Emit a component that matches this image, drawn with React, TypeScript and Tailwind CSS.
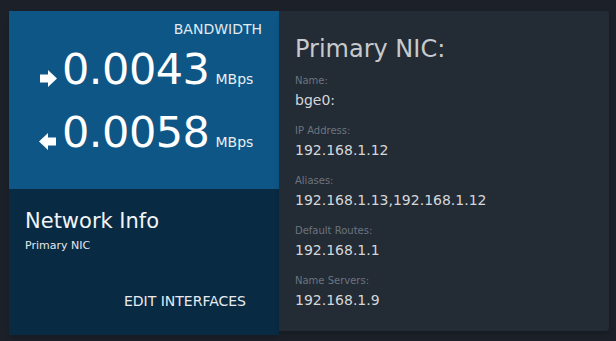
import React from "react";

interface IField {
  label: string;
  value: string;
}

const fields: IField[] = [
  { label: "Name:", value: "bge0:" },
  { label: "IP Address:", value: "192.168.1.12" },
  { label: "Aliases:", value: "192.168.1.13,192.168.1.12" },
  { label: "Default Routes:", value: "192.168.1.1" },
  { label: "Name Servers:", value: "192.168.1.9" },
];

const Arrow = ({ dir }: { dir: "in" | "out" }) => (
  <svg
    width="18"
    height="17"
    viewBox="0 0 18 17"
    className={dir === "in" ? "rotate-180" : ""}
  >
    <polygon points="1,4.5 9,4.5 9,0 18,8.5 9,17 9,12.5 1,12.5" fill="#ffffff" />
  </svg>
);

const Rate = ({ dir, value }: { dir: "in" | "out"; value: string }) => (
  <div className="flex items-end h-[42px]">
    <div className="mb-[3px] mr-[5px]">
      <Arrow dir={dir} />
    </div>
    <span className="text-[43px] leading-[42px] text-white tracking-[-0.5px]">{value}</span>
    <span className="text-[14px] leading-[14px] text-[#e8eef3] ml-[6px] mb-[4px]">MBps</span>
  </div>
);

const App = () => {
  return (
    <div
      className="w-[616px] h-[341px] bg-[#1b2029] pt-[11px] pl-[9px] flex items-start"
      style={{ fontFamily: '"DejaVu Sans", sans-serif' }}
    >
      <div className="w-[270px] h-[324px] flex flex-col shadow-md">
        <div className="h-[178px] bg-[#0e5686] flex flex-col pt-[11px]">
          <div className="text-[14px] leading-[14px] text-[#e2eaf1] text-right pr-[17px]">
            BANDWIDTH
          </div>
          <div className="pl-[30px] mt-[12px] flex flex-col gap-[21px]">
            <Rate dir="out" value="0.0043" />
            <Rate dir="in" value="0.0058" />
          </div>
        </div>
        <div className="flex-1 bg-[#082a43] flex flex-col pl-[16px] pt-[22px] pb-[27px]">
          <div className="text-[21px] leading-[21px] text-[#f1f4f7]">Network Info</div>
          <div className="text-[11px] leading-[11px] text-[#e3e8ed] mt-[8px]">Primary NIC</div>
          <div className="mt-auto self-end pr-[33px] text-[14px] leading-[14px] text-[#e8ecf0]">
            EDIT INTERFACES
          </div>
        </div>
      </div>
      <div className="w-[330px] h-[320px] bg-[#232b35] rounded-r-[3px] pl-[16px] pt-[26px] shadow-md">
        <div className="text-[24px] leading-[24px] text-[#c7cacd]">Primary NIC:</div>
        <div className="flex flex-col mt-[15px] gap-[18.6px]">
          {fields.map((f) => (
            <div key={f.label} className="flex flex-col">
              <div className="text-[10px] leading-[10px] text-[#6c757f]">{f.label}</div>
              <div className="text-[14px] leading-[14px] text-[#d4d7da] mt-[7.4px]">{f.value}</div>
            </div>
          ))}
        </div>
      </div>
    </div>
  );
};

export default App;
